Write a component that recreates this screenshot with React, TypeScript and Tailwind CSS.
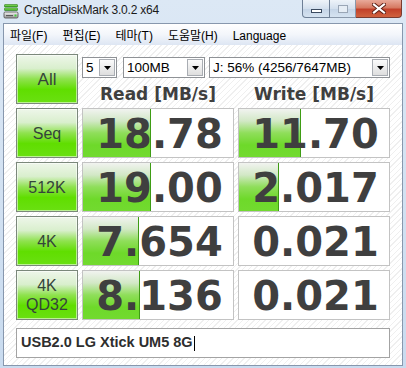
import React from "react";

function DriveIcon() {
  return (
    <svg width="16" height="16" viewBox="0 0 16 16">
      <defs>
        <linearGradient id="g1" x1="0" y1="0" x2="0" y2="1">
          <stop offset="0" stopColor="#9be86a" />
          <stop offset="1" stopColor="#2fa21a" />
        </linearGradient>
        <linearGradient id="g2" x1="0" y1="0" x2="0" y2="1">
          <stop offset="0" stopColor="#f4f4f4" />
          <stop offset="1" stopColor="#9a9a9a" />
        </linearGradient>
      </defs>
      <rect x="1.5" y="1.5" width="13" height="2.5" rx="0.5" fill="url(#g1)" stroke="#2a7a18" strokeWidth="0.6" />
      <rect x="1.5" y="5" width="13" height="2.5" rx="0.5" fill="url(#g1)" stroke="#2a7a18" strokeWidth="0.6" />
      <rect x="1" y="9" width="14" height="6" rx="1.2" fill="url(#g2)" stroke="#4a4a4a" strokeWidth="0.8" />
      <rect x="3" y="12" width="7" height="1.2" fill="#5a5a5a" />
      <rect x="11.5" y="11.5" width="2" height="2" fill="#3fd03a" />
    </svg>
  );
}

function Select({ w, text }: { w: number; text: string }) {
  return (
    <div
      className="flex h-[21px] items-center border border-[#8f9296] bg-white pl-[3px] pr-[1px]"
      style={{ width: w }}
    >
      <span className="flex-1 whitespace-nowrap font-['Liberation_Sans',sans-serif] text-[13.5px] leading-[16px] text-black">
        {text}
      </span>
      <div className="flex h-[17px] w-[16px] items-center justify-center border border-[#a9adb3] bg-[linear-gradient(to_bottom,#fbfbfb,#dedede)]">
        <svg width="7" height="4" viewBox="0 0 7 4">
          <path d="M0 0H7L3.5 4Z" fill="#000" />
        </svg>
      </div>
    </div>
  );
}

function GreenButton({ children, big }: { children: React.ReactNode; big?: boolean }) {
  return (
    <div
      className={
        "flex h-[50px] w-[62px] shrink-0 flex-col items-center justify-center border border-[#7b887b] bg-[linear-gradient(to_bottom,#eef6ea_0%,#d9efcd_28%,#8fe24f_50%,#60de00_72%,#6ae012_100%)] font-['Liberation_Sans',sans-serif] text-[#34443a] shadow-[inset_0_0_0_1px_rgba(255,255,255,0.55)] " +
        (big ? "text-[17px] leading-[19px]" : "text-[16px] leading-[19px]")
      }
    >
      {children}
    </div>
  );
}

function ValueBox({ value, bar }: { value: string; bar: number }) {
  return (
    <div className="relative h-[50px] w-[152px] shrink-0 border border-[#c3c3c3] bg-white">
      {bar > 0 && (
        <div
          className="absolute bottom-0 left-0 top-0 border-r border-[#3e9c14] bg-[linear-gradient(to_bottom,#f1f3f0_0%,#d2e8c6_25%,#8fde5a_50%,#6ed92a_75%,#72da30_100%)]"
          style={{ width: bar }}
        />
      )}
      <div className="relative flex h-full items-center justify-center pl-[3px] pt-[2px] font-['DejaVu_Sans',sans-serif] text-[40px] font-bold leading-[40px] text-[#3f3f3f]">
        {value}
      </div>
    </div>
  );
}

const rows = [
  { label: ["Seq"], read: "18.78", rb: 68, write: "11.70", wb: 62 },
  { label: ["512K"], read: "19.00", rb: 68, write: "2.017", wb: 40 },
  { label: ["4K"], read: "7.654", rb: 56, write: "0.021", wb: 0 },
  { label: ["4K", "QD32"], read: "8.136", rb: 57, write: "0.021", wb: 0 },
];

export default function App() {
  return (
    <div className="relative h-[368px] w-[406px] overflow-hidden bg-[linear-gradient(to_bottom,#dce8f5,#c9dbef)] font-['Liberation_Sans',sans-serif]">
      {/* title bar */}
      <div className="flex h-[23px] items-start">
        <div className="ml-[3px] mt-[3px]">
          <DriveIcon />
        </div>
        <div className="ml-[5px] mt-[3px] whitespace-nowrap text-[12px] leading-[15px] tracking-[-0.2px] text-[#1a1a1a]">
          CrystalDiskMark 3.0.2 x64
        </div>
        <div className="ml-auto mr-[4px] flex h-[18px]">
          <div className="flex h-[18px] w-[28px] items-end justify-center rounded-bl-[4px] border border-t-0 border-[#6e7f96] bg-[linear-gradient(to_bottom,#eef3f9,#d4e0ee_50%,#c3d3e6_51%,#d6e3f1)] pb-[4px]">
            <div className="h-[4px] w-[11px] border border-[#3b4a60] bg-white" />
          </div>
          <div className="flex h-[18px] w-[26px] items-center justify-center border-b border-r border-[#8a98ab] bg-[linear-gradient(to_bottom,#eef3f9,#d4e0ee_50%,#c3d3e6_51%,#d6e3f1)]">
            <div className="h-[8px] w-[10px] border border-[#9aa6b6] bg-[#e6edf5]" />
          </div>
          <div className="flex h-[18px] w-[46px] items-center justify-center rounded-br-[4px] border border-l-0 border-t-0 border-[#7a3b30] bg-[linear-gradient(to_bottom,#e9aa9a,#d67a62_45%,#c2412a_55%,#d0623f)]">
            <svg width="14" height="11" viewBox="0 0 14 11">
              <path d="M2 1.5L12 9.5M12 1.5L2 9.5" stroke="#5b1e14" strokeWidth="4" strokeLinecap="square" />
              <path d="M2 1.5L12 9.5M12 1.5L2 9.5" stroke="#ffffff" strokeWidth="2.2" strokeLinecap="square" />
            </svg>
          </div>
        </div>
      </div>

      {/* window body */}
      <div className="ml-[3px] flex h-[343px] w-[400px] flex-col border border-[#8797ad]">
        {/* menu bar */}
        <div className="flex h-[21px] shrink-0 items-center gap-[15px] bg-[linear-gradient(to_bottom,#ffffff,#f3f6fb_50%,#dde6f3)] pl-[6px] pt-[2px] font-['Liberation_Sans','Noto_Sans_CJK_KR',sans-serif] text-[12px] leading-[14px] text-black">
          <span>파일(F)</span>
          <span>편집(E)</span>
          <span>테마(T)</span>
          <span>도움말(H)</span>
          <span>Language</span>
        </div>

        {/* client */}
        <div className="flex-1 bg-[image:repeating-linear-gradient(135deg,#ffffff_0px,#ffffff_3px,#efefef_3px,#efefef_4px)] pl-[12px] pt-[9px]">
          <div className="flex gap-[4px]">
            <GreenButton big>All</GreenButton>
            <div className="w-[308px]">
              <div className="mt-[3px] flex">
                <Select w={36} text="5" />
                <div className="ml-[6px]">
                  <Select w={82} text="100MB" />
                </div>
                <div className="ml-[4px]">
                  <Select w={181} text="J: 56% (4256/7647MB)" />
                </div>
              </div>
              <div className="mt-[6px] flex gap-[4px] font-['DejaVu_Sans',sans-serif] text-[17px] font-bold leading-[20px] text-[#3f3f3f]">
                <div className="w-[152px] text-center">Read [MB/s]</div>
                <div className="w-[152px] text-center">Write [MB/s]</div>
              </div>
            </div>
          </div>

          {rows.map((r, i) => (
            <div key={i} className="mt-[4px] flex gap-[4px]">
              <GreenButton>
                {r.label.map((l) => (
                  <span key={l}>{l}</span>
                ))}
              </GreenButton>
              <ValueBox value={r.read} bar={r.rb} />
              <ValueBox value={r.write} bar={r.wb} />
            </div>
          ))}

          <div className="mt-[8px] flex h-[30px] w-[374px] items-center border border-[#a3a3a3] bg-white pl-[4px] font-['Liberation_Sans',sans-serif] text-[14.5px] font-bold text-[#2e2e2e]">
            <span>USB2.0 LG Xtick UM5 8G</span>
            <span className="ml-[1px] h-[15px] w-[1px] bg-black" />
          </div>
        </div>
      </div>
    </div>
  );
}
